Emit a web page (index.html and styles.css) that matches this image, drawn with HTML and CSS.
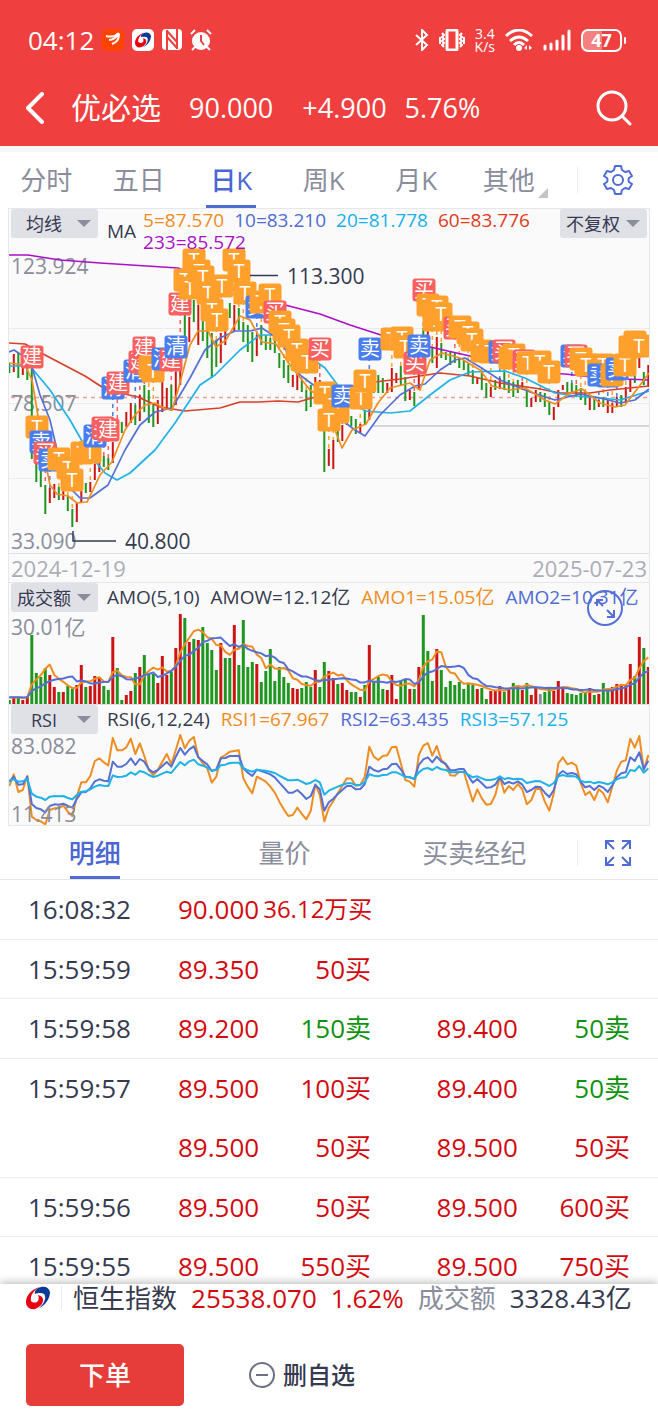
FILE: index.html
```
<!DOCTYPE html>
<html lang="zh-CN">

<head>
    <meta charset="utf-8">
    <meta name="viewport" content="width=device-width, initial-scale=1">
    <title>优必选 90.000</title>
    <link rel="stylesheet" href="styles.css">
</head>

<body>
    <svg width="0" height="0" class="defs">
        <symbol id="swirl" viewBox="0 0 24 24">
            <path fill="#e60012" d="M14 1C6 3 0 9 0 16c0 5 4 8 9 7 5-2 8-5 8-9 0-3-2-4-5-5 1 2 1 4 0 6-2 2-5 2-7 0-1-6 3-11 9-14z" />
            <path fill="#0b3b94" d="M9 8c-1-3 2-6 6-7 5-1 8 1 9 5 0 6-4 13-12 17 5-4 8-9 7-13 0-2-2-3-5-3-2 0-4 0-5 1z" />
        </symbol>
    </svg>

    <header class="header">
        <div class="status">
            <span class="clock">04:12</span>
            <svg class="app-icon" width="22" height="22" viewBox="0 0 22 22">
                <rect width="22" height="22" rx="5" fill="#ff4400" />
                <path d="M4 7q8 2 12-3M7 11q6 0 10-7M10 15q7-2 7-10" fill="none" stroke="#fff" stroke-width="2" />
            </svg>
            <svg class="app-icon" width="22" height="22" viewBox="0 0 22 22">
                <rect width="22" height="22" rx="5" fill="#fff" />
                <use href="#swirl" x="3" y="3" width="16" height="16" />
            </svg>
            <svg class="app-icon" width="20" height="22" viewBox="0 0 20 22">
                <rect width="20" height="21" rx="4" fill="#fff" />
                <path d="M5 1v20M15 0v20M5 2l10 11M5 8l10 11" fill="none" stroke="#ef3f3e" stroke-width="2" />
            </svg>
            <svg class="app-icon" width="22" height="22" viewBox="0 0 22 22">
                <circle cx="11" cy="12" r="9" fill="#fff" />
                <path d="M1 5l4-4M21 5l-4-4M5 18l-3 3M17 18l3 3" stroke="#fff" stroke-width="2" />
                <path d="M11 6v6l3 4" fill="none" stroke="#ef3f3e" stroke-width="2" />
            </svg>

            <div class="status-right">
                <svg width="14" height="22" viewBox="0 0 14 22">
                    <path d="M1 6l11 10-5 5V1l5 5L1 16" fill="none" stroke="#fff" stroke-width="2" />
                </svg>
                <svg width="26" height="22" viewBox="0 0 26 22">
                    <rect x="8" y="1" width="10" height="20" rx="1" fill="none" stroke="#fff" stroke-width="3" />
                    <path d="M3 4l2 2-2 2 2 2-2 2 2 2-2 2 2 2M1 8v7M23 4l-2 2 2 2-2 2 2 2-2 2 2 2-2 2M25 8v7" fill="none" stroke="#fff" stroke-width="2" />
                </svg>
                <span class="speed">3.4<br>K/s</span>
                <svg width="28" height="22" viewBox="0 0 28 22">
                    <path d="M1 7q13-12 26 0M5 12q9-8 18 0M9 16q5-5 10 0" fill="none" stroke="#fff" stroke-width="3" />
                    <circle cx="14" cy="19" r="3" fill="#fff" />
                    <path d="M22 16v5l-3-2zM24 16v5l3-2z" fill="#fff" />
                </svg>
                <svg width="28" height="22" viewBox="0 0 28 22">
                    <path d="M2 20v-3M8 20v-5M14 20v-8M20 20V7M26 20V2" stroke="#fff" stroke-width="3" stroke-linecap="round" />
                </svg>
                <span class="battery">47</span>
            </div>
        </div>

        <div class="titlebar">
            <button class="icon-btn back" aria-label="返回">
                <svg width="20" height="32" viewBox="0 0 20 32">
                    <path d="M17 2L3 16l14 14" fill="none" stroke="#fff" stroke-width="4" stroke-linecap="round" stroke-linejoin="round" />
                </svg>
            </button>
            <h1>优必选</h1>
            <span class="price">90.000</span>
            <span class="change">+4.900</span>
            <span class="percent">5.76%</span>
            <button class="icon-btn search" aria-label="搜索">
                <svg width="36" height="36" viewBox="0 0 36 36">
                    <path d="M27 27l7 7" stroke="#fff" stroke-width="3" stroke-linecap="round" />
                    <circle cx="16" cy="16" r="14" fill="none" stroke="#fff" stroke-width="3" />
                </svg>
            </button>
        </div>
    </header>

    <nav class="tabs period">
        <a href="#">分时</a>
        <a href="#">五日</a>
        <a href="#" class="active">日K</a>
        <a href="#">周K</a>
        <a href="#">月K</a>
        <a href="#" class="more">其他</a>
        <button class="icon-btn tool" aria-label="设置">
            <svg width="30" height="30" viewBox="0 0 30 30" fill="none" stroke="#4f6bd5" stroke-width="2" stroke-linejoin="round">
                <path d="M12 1h6l1 4 3 2 4-1 3 5-3 2q-1 2 0 4l3 2-3 5-4-1-3 2-1 4h-6l-1-4-3-2-4 1-3-5 3-2q1-2 0-4l-3-2 3-5 4 1 3-2z" />
                <circle cx="15" cy="15" r="5" />
            </svg>
        </button>
    </nav>

    <main class="chart">
        <section class="panel">
            <svg id="kline" viewBox="9 209 640 344"></svg>
            <div class="panel-head">
                <label class="pick"><select aria-label="主图指标"><option>均线</option></select></label>
                <span class="ma-name">MA</span>
                <div class="legend">
                    <span class="c-orange">5=87.570</span>
                    <span class="c-blue">10=83.210</span>
                    <span class="c-cyan">20=81.778</span>
                    <span class="c-brick">60=83.776</span>
                    <span class="c-purple">233=85.572</span>
                </div>
                <label class="pick"><select aria-label="复权"><option>不复权</option></select></label>
            </div>
        </section>

        <div class="dates">
            <time>2024-12-19</time>
            <time>2025-07-23</time>
        </div>

        <section class="panel">
            <svg id="amount" viewBox="9 583 640 122"></svg>
            <div class="panel-head">
                <label class="pick"><select aria-label="副图一"><option>成交额</option></select></label>
                <div class="legend single">
                    <span>AMO(5,10)</span>
                    <span>AMOW=12.12亿</span>
                    <span class="c-orange">AMO1=15.05亿</span>
                    <span class="c-blue">AMO2=10.31亿</span>
                </div>
            </div>
            <button class="icon-btn expand" aria-label="放大">
                <svg width="36" height="36" viewBox="0 0 36 36" fill="none" stroke="#5470d6" stroke-width="2">
                    <circle cx="18" cy="18" r="17" />
                    <path d="M16 16l-6-6M10 16v-6h6M20 20l7 7M27 20v7h-7" />
                </svg>
            </button>
        </section>

        <section class="panel last">
            <svg id="rsi" viewBox="9 705 640 120"></svg>
            <div class="panel-head">
                <label class="pick"><select aria-label="副图二"><option>RSI</option></select></label>
                <div class="legend single">
                    <span>RSI(6,12,24)</span>
                    <span class="c-orange">RSI1=67.967</span>
                    <span class="c-blue">RSI2=63.435</span>
                    <span class="c-cyan">RSI3=57.125</span>
                </div>
            </div>
        </section>
    </main>

    <nav class="tabs detail">
        <a href="#" class="active">明细</a>
        <a href="#">量价</a>
        <a href="#">买卖经纪</a>
        <button class="icon-btn tool" aria-label="全屏">
            <svg width="26" height="26" viewBox="0 0 26 26" fill="none" stroke="#4f6bd5" stroke-width="2">
                <path d="M9 9L2 2M1 9V1h8M17 9l7-7M17 1h8v8M9 17l-7 7M1 17v8h8M17 17l7 7M25 17v8h-8" />
            </svg>
        </button>
    </nav>

    <div class="ticks">
        <table>
            <colgroup>
                <col class="col-time">
                <col class="col-price">
                <col class="col-vol">
                <col class="col-price2">
                <col class="col-vol2">
            </colgroup>
            <tbody>
                <tr>
                    <td>16:08:32</td>
                    <td class="up">90.000</td>
                    <td class="up small">36.12万买</td>
                    <td></td>
                    <td></td>
                </tr>
                <tr>
                    <td>15:59:59</td>
                    <td class="up">89.350</td>
                    <td class="up">50买</td>
                    <td></td>
                    <td></td>
                </tr>
                <tr>
                    <td>15:59:58</td>
                    <td class="up">89.200</td>
                    <td class="down">150卖</td>
                    <td class="up">89.400</td>
                    <td class="down">50卖</td>
                </tr>
                <tr class="joined">
                    <td>15:59:57</td>
                    <td class="up">89.500</td>
                    <td class="up">100买</td>
                    <td class="up">89.400</td>
                    <td class="down">50卖</td>
                </tr>
                <tr>
                    <td></td>
                    <td class="up">89.500</td>
                    <td class="up">50买</td>
                    <td class="up">89.500</td>
                    <td class="up">50买</td>
                </tr>
                <tr>
                    <td>15:59:56</td>
                    <td class="up">89.500</td>
                    <td class="up">50买</td>
                    <td class="up">89.500</td>
                    <td class="up">600买</td>
                </tr>
                <tr>
                    <td>15:59:55</td>
                    <td class="up">89.500</td>
                    <td class="up">550买</td>
                    <td class="up">89.500</td>
                    <td class="up">750买</td>
                </tr>
            </tbody>
        </table>
    </div>

    <footer class="footer">
        <div class="index">
            <div class="index-logo">
                <svg width="24" height="24"><use href="#swirl" /></svg>
            </div>
            <span>恒生指数</span>
            <span class="up">25538.070</span>
            <span class="up">1.62%</span>
            <span class="muted">成交额</span>
            <span>3328.43亿</span>
        </div>
        <div class="actions">
            <button class="order">下单</button>
            <button class="remove">
                <svg width="26" height="26" viewBox="0 0 26 26" fill="none" stroke="#6b7083" stroke-width="2">
                    <circle cx="13" cy="13" r="12" />
                    <path d="M7 13h12" />
                </svg>
                删自选
            </button>
        </div>
    </footer>

    <script src="chart.js"></script>
</body>

</html>
```
FILE: styles.css
```
* {
    box-sizing: border-box;
}

body {
    display: flex;
    flex-direction: column;
    height: 100vh;
    margin: 0;
    overflow: hidden;
    background: #fff;
    color: #353a50;
    font-family: "Open Sans", "Noto Sans CJK SC", sans-serif;
    font-size: 26px;
    line-height: 30px;
}

button,
select {
    margin: 0;
    padding: 0;
    border: 0;
    background: none;
    color: inherit;
    font: inherit;
    cursor: pointer;
}

a {
    color: inherit;
    text-decoration: none;
}

svg {
    display: block;
}

.defs {
    position: absolute;
}

.icon-btn {
    display: flex;
    align-items: center;
    justify-content: center;
}

/* Text colours */
.up {
    color: #d20a10;
}

.down {
    color: #0f930f;
}

.muted {
    color: #8a8d9c;
}

.c-orange {
    color: #f08c1e;
}

.c-blue {
    color: #4f6bd5;
}

.c-cyan {
    color: #18b0ea;
}

.c-brick {
    color: #de3a22;
}

.c-purple {
    color: #ab10c8;
}

/* Header */
.header {
    flex: none;
    padding-bottom: 10px;
    background: #ef3f3e;
    color: #fff;
}

.status {
    display: flex;
    align-items: center;
    gap: 8px;
    height: 80px;
    padding: 0 36px 0 28px;
}

.clock {
    font-weight: 500;
}

.status-right {
    display: flex;
    align-items: center;
    gap: 10px;
    margin-left: auto;
}

.speed {
    font-size: 14px;
    font-weight: 500;
    line-height: 13px;
    text-align: center;
}

.battery {
    position: relative;
    width: 41px;
    height: 23px;
    border: 2px solid #fff;
    border-radius: 7px;
    background: linear-gradient(90deg, #f58080 50%, transparent 50%);
    font-size: 18px;
    font-weight: 700;
    line-height: 19px;
    text-align: center;
}

.battery::after {
    content: "";
    position: absolute;
    top: 6px;
    right: -6px;
    width: 2px;
    height: 7px;
    border-radius: 1px;
    background: #fff;
}

.titlebar {
    display: flex;
    align-items: center;
    height: 56px;
    padding: 0 26px 0 25px;
    font-size: 27px;
}

.titlebar h1 {
    margin: 0 28px 0 26px;
    font-size: 30px;
    font-weight: 400;
}

.price {
    margin-right: 29px;
}

.change {
    margin-right: 18px;
}

.search {
    margin-left: auto;
}

/* Tabs */
.tabs {
    display: flex;
    flex: none;
    height: 56px;
    color: #8a8d9c;
}

.tabs a {
    position: relative;
    flex: 1;
    line-height: 56px;
    text-align: center;
}

.tabs .active {
    color: #4a67d4;
    font-weight: 500;
}

.tabs .active::after {
    content: "";
    position: absolute;
    bottom: 0;
    left: 50%;
    width: 50px;
    height: 3px;
    margin-left: -25px;
    background: #4f6bd5;
}

.period {
    height: 62px;
    border-top: 6px solid #f7f7f8;
}

.more::after {
    content: "";
    position: absolute;
    right: 7px;
    bottom: 10px;
    border: 5px solid transparent;
    border-right-color: #c4c4c4;
    border-bottom-color: #c4c4c4;
}

.tool {
    position: relative;
    width: 81px;
    margin-left: 22px;
}

.tool::before {
    content: "";
    position: absolute;
    left: 0;
    width: 1px;
    height: 26px;
    background: #ececf0;
}

.detail {
    height: 54px;
    border-bottom: 1px solid #e7e7ea;
}

.detail a {
    line-height: 54px;
}

.detail .tool {
    margin-left: 8px;
}

/* Charts */
.chart {
    flex: none;
    margin: 0 8px;
    border: solid #e6e7eb;
    border-width: 0 1px;
    background: #fafafa;
}

.panel {
    position: relative;
    border-top: 1px solid #e6e7eb;
}

.panel > svg {
    width: 100%;
}

.panel.last {
    border-top: 0;
    border-bottom: 1px solid #e6e7eb;
}

.panel-head {
    position: absolute;
    top: 0;
    left: 2px;
    right: 2px;
    display: flex;
    font-size: 19px;
    line-height: 22px;
}

.pick {
    position: relative;
    flex: none;
    width: 87px;
    height: 29px;
    border-radius: 3px;
    background: #e0e1e6;
}

.pick::after {
    content: "";
    position: absolute;
    top: 11px;
    right: 7px;
    border: 7px solid transparent;
    border-top-color: #8a8d9c;
    border-bottom: 0;
    pointer-events: none;
}

.pick select {
    width: 100%;
    height: 29px;
    padding-right: 21px;
    appearance: none;
    font-size: 18px;
    text-align: center;
    text-align-last: center;
}

.ma-name {
    margin: 0 7px 0 9px;
    line-height: 44px;
}

.legend {
    display: flex;
    flex: 1;
    flex-wrap: wrap;
    column-gap: 10px;
    white-space: nowrap;
}

.legend.single {
    flex-wrap: nowrap;
    column-gap: 11px;
    margin-left: 9px;
    line-height: 29px;
}

.dates {
    display: flex;
    justify-content: space-between;
    padding: 0 2px;
    border-top: 1px solid #e0e1e6;
    color: #abadb8;
    font-size: 22px;
    line-height: 28px;
}

.expand {
    position: absolute;
    top: 7px;
    right: 26px;
}

.axis {
    fill: #8a8d9c;
    font-size: 21px;
}

.mark {
    fill: #353a50;
    font-size: 21px;
}

.badge {
    fill: #fff;
    font-size: 20px;
    text-anchor: middle;
}

/* Ticks */
.ticks {
    flex: 1;
    min-height: 0;
    overflow: hidden;
}

.ticks table {
    width: 100%;
    border-collapse: separate;
    border-spacing: 0;
    table-layout: fixed;
}

.ticks td {
    height: 60px;
    padding: 0 4px 1px 0;
    border-bottom: 1px solid #ebebee;
    text-align: right;
    white-space: nowrap;
}

.ticks td:first-child {
    padding-left: 28px;
    text-align: left;
}

.ticks td:nth-child(4) {
    padding-right: 2px;
}

.ticks td:last-child {
    padding-right: 28px;
}

.ticks tr:nth-child(even) td {
    height: 59px;
}

.ticks .joined td {
    border-bottom: 0;
}

.ticks .small {
    font-size: 24px;
}

.col-time {
    width: 24%;
}

.col-price {
    width: 16%;
}

.col-vol {
    width: 17%;
}

.col-price2 {
    width: 22%;
}

.col-vol2 {
    width: 21%;
}

/* Footer */
.footer {
    position: relative;
    flex: none;
    padding: 0 26px 10px;
    background: #fff;
    box-shadow: 0 -2px 8px rgba(0, 0, 0, 0.25);
}

.index {
    display: flex;
    align-items: center;
    gap: 14px;
    height: 28px;
    margin-bottom: 32px;
    white-space: nowrap;
}

.index-logo {
    flex: none;
    width: 36px;
    margin-right: -3px;
    border-right: 1px solid #ececf0;
}

.actions {
    display: flex;
    align-items: center;
    gap: 65px;
}

.order {
    width: 158px;
    height: 62px;
    border-radius: 5px;
    background: #e63c3a;
    color: #fff;
    font-weight: 500;
}

.remove {
    display: flex;
    align-items: center;
    gap: 8px;
    font-size: 24px;
    font-weight: 500;
}
```
FILE: chart.js
```
const RED = '#cc1414';
const GREEN = '#1f961f';
const ORANGE = '#ee8d22';
const BLUE = '#5570d4';
const CYAN = '#1fb2e8';
const STEP = 4.5;

const barX = i => 9.3 + i * STEP;
const nums = s => s.trim().split(/\s+/);

function line(points, color, width = 2) {
    return `<polyline points="${points.join(' ')}" fill="none" stroke="${color}" stroke-width="${width}" stroke-linejoin="round"/>`;
}

function stick(x, y1, y2, color, width, dash = '') {
    return `<path d="M${x} ${y1}V${y2}" stroke="${color}" stroke-width="${width}" stroke-dasharray="${dash}"/>`;
}

/* high-low range of every day */
const candles = nums(`
g363-373 r354-372 g353-378 r366-375 g368-380 g368-459 g457-482 g465-487 g485-514 r488-503
r484-498 g487-500 r487-500 g496-511 g509-527 r503-522 r490-502 g483-493 r482-492 r464-480
r462-472 g456-467 g458-470 r442-463 r425-440 g422-433 r412-427 r403-423 g405-425 r395-421
g385-412 g390-423 g404-427 r400-424 r380-412 r388-410 g385-411 r372-405 r360-385 g315-336
r317-342 g300-322 r305-345 g320-341 g330-358 g333-378 g340-367 r333-363 r320-345 g303-318
r305-331 g308-330 g322-342 g325-352 g332-362 r335-356 g325-345 g335-350 g338-350 g340-353
g353-368 g360-378 g365-383 r375-387 r373-390 g380-392 g390-411 g385-407 r377-392 r380-394
g420-472 r449-466 r440-469 g423-442 r425-441 r417-425 g416-426 g419-434 r424-433 g410-425
r405-420 g380-393 g375-393 g378-393 r383-393 r368-392 r373-383 g366-385 g377-401 r390-400
g392-406 r372-390 g328-350 r330-355 g348-363 r337-368 g343-358 g352-360 g352-365 g353-363
g358-368 g360-370 g363-375 g370-384 r377-384 g372-390 g383-398 r387-397 g380-390 r378-389
g372-390 g380-393 g382-397 g380-393 r382-390 g390-407 r398-407 r390-402 g392-402 g393-407
g402-415 r407-420 r390-407 r385-390 g382-392 g383-393 g385-397 g388-400 g393-405 r395-410
g397-410 r400-407 g397-407 r400-413 r403-413 r397-407 g395-407 r387-403 r380-392 g370-383
r358-368 g372-385 r365-387`);

/* turnover, one bar a day: colour + height */
const amounts = nums(`
g4 r6 g6 r4 r8 g69 g31 g27 g36 r29 r17 g12 r12 g18 g15 r19 r39 g17 r18 r28
r27 g18 g14 r67 g36 g4 r9 r13 g31 r37 g49 g30 g30 r21 r48 r29 g32 r56 r90 g86
r62 g65 r64 g77 g61 g54 g34 r61 g46 g46 r79 g39 g84 g37 g42 r40 g22 g33 g55 g23
g37 g27 g21 r16 r15 g16 g22 g17 r34 g17 g42 r33 r26 g20 r21 r14 g12 g12 r7 g19
r59 g23 g27 g15 r14 r29 r5 g23 g25 r15 g15 r37 g89 g53 g23 r55 g34 g17 g23 g19
g22 g15 g20 g19 r15 g16 g5 r13 r13 r18 g12 r15 g21 g19 r14 g21 r9 r16 n10 g12
g15 r13 r23 r17 g11 g10 g9 g11 g11 r16 g9 r10 g21 g14 r17 r20 r19 r19 r40 g28
r67 g56 r37`);

const rsi = {
    [ORANGE]: `618 583 636 630 588 710 720 724 733 690 685 685 676 695 708 650 607 607 588 543
535 547 556 474 511 511 502 476 522 490 528 570 585 570 545 522 552 510 465 505
482 471 530 550 565 608 590 533 525 515 513 511 595 620 640 590 597 605 620 638
665 688 708 705 683 702 718 692 613 645 724 684 663 640 617 595 596 617 615 590
500 530 540 528 526 502 500 550 600 605 620 525 497 489 527 498 540 553 586 587
575 575 620 664 628 655 674 672 645 590 638 618 630 612 628 673 660 627 627 665
692 640 550 532 553 548 557 610 645 635 660 628 640 667 620 572 545 541 476 503
468 570 525`,
    [BLUE]: `605 590 614 613 590 672 684 688 697 678 673 674 671 678 683 657 637 636 625 604
598 602 604 545 560 560 552 535 555 537 545 568 577 570 558 546 560 530 504 524
508 499 532 543 553 573 568 535 534 528 528 527 565 578 588 569 573 578 583 592
608 622 638 638 630 642 657 648 615 628 692 667 656 642 630 618 618 628 627 612
560 570 575 568 566 553 551 568 590 592 597 555 538 532 547 530 545 552 571 571
567 567 588 608 597 610 623 622 614 592 612 606 611 604 614 636 630 620 621 638
651 630 584 573 582 579 583 606 622 618 630 617 623 636 616 592 580 577 532 543
517 567 542`,
    [CYAN]: `602 598 605 604 597 641 650 653 660 650 648 649 648 654 658 645 635 634 628 620
615 617 618 586 591 590 587 577 584 573 577 585 591 587 581 575 579 562 546 556
544 539 553 557 563 572 570 556 554 549 548 548 564 571 575 569 571 572 575 579
587 594 601 601 599 605 612 608 600 607 644 632 626 620 615 610 610 615 614 606
583 587 589 585 584 577 577 583 591 592 596 577 567 564 570 561 568 570 577 577
576 576 584 592 589 595 600 600 597 589 597 594 598 596 598 609 606 603 604 611
618 609 589 585 589 588 590 602 607 605 610 606 609 613 607 598 593 592 570 573
558 578 565`
};

const averages = [
    ['#ab10c8', '9,255 28,255 60,260 100,263 178,268 240,292 285,305 320,314 350,325 381,335 430,347 470,356 540,373 565,374 600,378 649,380'],
    ['#d9402a', '9,343 25,344 45,355 85,376 102,387 120,393 138,397 160,407 185,411 220,408 240,402 258,402 278,401 298,402 312,398 340,390 375,382 400,379 420,376 440,373 470,376 500,383 540,389 560,393 590,393 610,390 649,386'],
    [CYAN, '9,366 30,366 50,390 70,420 90,455 105,473 117,480 130,473 155,450 175,423 200,385 215,375 240,350 260,335 275,335 300,350 325,368 345,395 365,411 390,413 410,411 430,395 450,380 470,372 505,371 525,378 555,393 575,396 600,398 620,400 649,391'],
    [BLUE, '9,352 14,350 20,354 30,360 40,395 50,420 57,450 70,488 80,498 90,498 108,485 125,450 140,425 155,412 172,408 180,395 190,378 205,350 220,338 235,331 250,331 262,328 280,340 300,375 320,390 343,421 355,430 365,436 380,415 400,395 415,386 425,384 440,370 455,360 465,358 480,367 500,380 530,392 555,400 580,394 600,398 620,403 635,400 649,389'],
    [ORANGE, '9,363 25,365 32,380 40,428 47,470 50,485 57,494 68,496 77,503 87,502 92,492 100,475 112,462 125,430 135,415 145,405 155,403 165,409 172,410 178,390 190,345 198,331 208,331 216,347 226,340 240,316 250,320 262,342 276,344 290,365 310,390 322,398 335,430 342,448 352,430 366,424 378,403 390,388 410,383 420,390 430,360 442,353 460,358 480,370 492,386 510,390 525,388 545,400 555,404 570,393 582,389 600,403 615,407 625,405 638,388 649,373']
];

/* trade badges, back to front */
const badgeColors = { 建: '#f9605f', 买: '#f9605f', 清: '#4a7df0', 卖: '#4a7df0', T: '#ffa02c' };
const badges = nums(`
建32,357 T37,427 卖41,442 买45,453 卖50,460 T59,459 T68,468 T82,453 T72,480 T90,452
清95,436 买103,428 建108,430 清113,388 建118,383 清135,371 建140,362 建144,348 T150,367 T153,371
清163,359 建171,360 清176,347 建180,304 T185,280 T194,260 T190,288 T199,271 T203,277 T208,293
T212,310 T217,320 T222,286 T234,260 T245,293 T239,271 卖257,307 T261,302 T270,295 买275,312
T280,322 T284,330 T289,336 T297,350 T302,360 T307,362 买320,349 T325,393 T334,405 T338,412
T329,420 卖343,396 T361,398 T365,381 卖370,349 T392,339 T402,338 T405,347 买415,363 卖419,346
买424,290 T428,305 T434,320 T437,307 T441,314 买455,328 T460,327 T468,333 T472,340 T482,351
T490,352 卖500,352 买504,351 T510,358 T514,355 买524,361 T528,363 T540,362 T549,372 卖572,356
买576,356 T581,359 T586,365 T603,365 卖599,375 卖608,376 T612,375 卖617,369 T625,365 T630,347
T635,342 T639,346`).map(s => {
    const [x, y] = s.slice(1).split(',').map(Number);
    return { kind: s[0], x, y };
});

function drawKline() {
    let out = '';
    for (const y of [328, 403, 478]) {
        out += `<path d="M9 ${y + 0.5}H649" stroke="#ececee"/>`;
    }
    out += '<path d="M372 426H649" stroke="#d2d4d9" stroke-width="2"/>';
    out += '<path d="M11 397.500H649" stroke="#f0a090" stroke-width="1.500" stroke-dasharray="4 4"/>';
    out += '<text class="axis" x="11" y="274">123.924</text>';
    out += '<text class="axis" x="11" y="411">78.507</text>';
    out += '<text class="axis" x="11" y="549">33.090</text>';

    candles.forEach((c, i) => {
        const [high, low] = c.slice(1).split('-');
        out += stick(barX(i), high, low, c[0] === 'r' ? RED : GREEN, 2);
    });
    for (const b of badges) {
        const i = Math.round((b.x - 9.3) / STEP);
        const high = Number(candles[i].slice(1).split('-')[0]);
        if (high > b.y) out += stick(barX(i), b.y, high, badgeColors[b.kind], 1.5, '4 4');
    }
    for (const [color, points] of averages) {
        out += line([points], color, 1.7);
    }
    for (const b of badges) {
        out += `<rect x="${b.x - 11.5}" y="${b.y - 11.5}" width="23" height="23" rx="3" fill="${badgeColors[b.kind]}"/>`;
        out += `<text class="badge" x="${b.x}" y="${b.y + 7}">${b.kind}</text>`;
    }

    out += '<path d="M250 275.500H278M73 531V541H116" fill="none" stroke="#353a50" stroke-width="1.500"/>';
    out += '<text class="mark" x="287" y="284">113.300</text>';
    out += '<text class="mark" x="125" y="549">40.800</text>';
    document.getElementById('kline').innerHTML = out;
}

function movingAverage(values, n) {
    return values.map((v, i) => {
        let sum = 0;
        for (let k = i - n + 1; k <= i; k++) sum += k < 0 ? 6 : values[k];
        return `${barX(i)},${703 - sum / n}`;
    });
}

function drawAmount() {
    const colors = { r: RED, g: GREEN, n: '#8a8d9c' };
    const values = amounts.map(a => Number(a.slice(1)));
    let out = '<text class="axis" x="11" y="635">30.01亿</text>';
    amounts.forEach((a, i) => {
        out += stick(barX(i), 704, 704 - values[i], colors[a[0]], 3);
    });
    out += line(movingAverage(values, 5), ORANGE);
    out += line(movingAverage(values, 10), BLUE);
    out += '<path d="M9 704.500H649" stroke="#e0e1e6"/>';
    document.getElementById('amount').innerHTML = out;
}

function drawRsi() {
    let out = '';
    for (const color in rsi) {
        out += line(nums(rsi[color]).map((v, i) => `${barX(i)},${580 + v / 3}`), color);
    }
    out += '<text class="axis" x="11" y="754">83.082</text><text class="axis" x="11" y="822">11.413</text>';
    document.getElementById('rsi').innerHTML = out;
}

drawKline();
drawAmount();
drawRsi();
```
